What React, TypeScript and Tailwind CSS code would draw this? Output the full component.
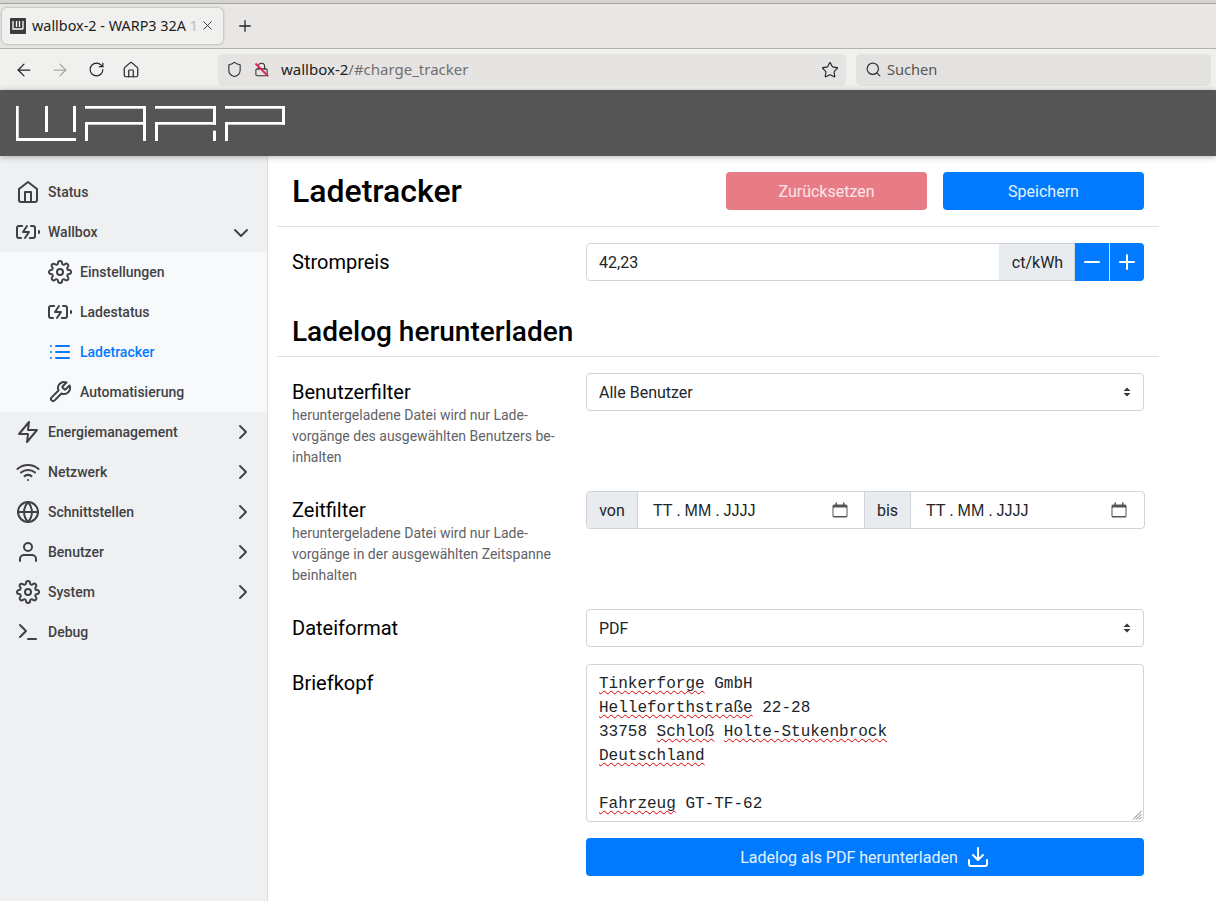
import React from "react";
import { ArrowLeft, ArrowRight, RotateCw, House, Shield, Lock, Star, Search, X, Plus } from "lucide-react";
import { FiHome, FiBatteryCharging, FiSettings, FiList, FiTool, FiZap, FiWifi, FiGlobe, FiUser, FiChevronRight, FiChevronDown, FiTerminal, FiDownload, FiMinus, FiPlus } from "react-icons/fi";

const roboto = "font-['Roboto',sans-serif]";
const chromeFont = "font-['Noto_Sans',sans-serif]";

function Logo() {
  const bars: [number, number, number, number][] = [
    [16, 106, 2.7, 35], [16, 138, 60, 3], [45, 106, 3, 26], [73, 106, 3, 26],
    [85, 106, 61, 2.7], [143, 106, 3, 35], [85, 122, 58, 2.7], [85, 122, 3, 19],
    [155, 106, 61, 2.7], [213, 106, 3, 18.7], [155, 122, 61, 2.7], [155, 122, 3, 19], [213, 130.7, 3, 10.3],
    [225, 106, 60, 2.7], [282, 106, 3, 18.7], [225, 122, 60, 2.7], [225, 122, 3, 19],
  ];
  return (
    <svg width="290" height="66" viewBox="0 90 290 66" className="block">
      {bars.map((b, i) => <rect key={i} x={b[0]} y={b[1]} width={b[2]} height={b[3]} fill="#fff" />)}
    </svg>
  );
}

function BrowserChrome() {
  return (
    <div className={`${chromeFont} h-[90px] shrink-0 flex flex-col`}>
      <div className="h-[4px] bg-[#d6d4d1] border-b border-[#a3a29f]" />
      <div className="h-[45px] bg-[#e8e7e5] border-b border-[#b3b2af] flex items-center pl-[2px]">
        <div className="w-[221px] h-[36px] bg-[#f0f0ee] rounded-[5px] shadow-[0_0_3px_rgba(0,0,0,0.35)] flex items-center pl-[8px] relative overflow-hidden">
          <svg width="16" height="16" viewBox="0 0 16 16" className="shrink-0">
            <rect width="16" height="16" rx="1" fill="#3b3b3b" />
            <path d="M3 3v8h10M6.5 3v6M9.5 3v6M13 3v8" stroke="#fff" strokeWidth="1.3" fill="none" />
          </svg>
          <span className="ml-[6px] text-[14.4px] text-[#1c1c1c] whitespace-nowrap">wallbox-2 - WARP3 32A <span className="text-[#bbbbb9]">1</span></span>
          <X size={15} strokeWidth={1.5} className="absolute right-[8px] top-[10px] text-[#333]" />
        </div>
        <Plus size={18} strokeWidth={1.7} className="ml-[13px] text-[#222]" />
      </div>
      <div className="h-[41px] bg-[#f0f0ef] flex items-center">
        <ArrowLeft size={20} strokeWidth={1.5} className="ml-[14px] text-[#222]" />
        <ArrowRight size={20} strokeWidth={1.5} className="ml-[16px] text-[#a5a5a3]" />
        <RotateCw size={17} strokeWidth={1.6} className="ml-[18px] text-[#222]" />
        <House size={18} strokeWidth={1.6} className="ml-[17px] text-[#222]" />
        <div className="ml-[78px] w-[628px] h-[32px] bg-[#e5e4e2] rounded-[5px] flex items-center pl-[8px] pr-[7px]">
          <Shield size={17} strokeWidth={1.6} className="text-[#333]" />
          <span className="relative ml-[11px] block w-[16px] h-[16px]">
            <Lock size={15} strokeWidth={1.7} className="text-[#333]" />
            <span className="absolute left-[-1px] top-[7px] w-[18px] h-[1.5px] bg-[#e0295c] rotate-45" />
          </span>
          <span className="ml-[11px] text-[15px] whitespace-nowrap text-[#1c1c1c]">wallbox-2<span className="text-[#6f6f6e]">/#charge_tracker</span></span>
          <Star size={18} strokeWidth={1.5} className="ml-auto text-[#222]" />
        </div>
        <div className="ml-[10px] w-[355px] h-[32px] bg-[#e3e2e0] rounded-[5px] flex items-center pl-[9px]">
          <Search size={17} strokeWidth={1.7} className="text-[#333]" />
          <span className="ml-[5px] text-[14.6px] text-[#555]">Suchen</span>
        </div>
      </div>
    </div>
  );
}

function NavItem({ icon, label, chevron, sub, active }: { icon: React.ReactNode; label: string; chevron?: "r" | "d"; sub?: boolean; active?: boolean }) {
  return (
    <div className={`h-[40px] flex items-center ${sub ? "pl-[48px]" : "pl-[16px]"} ${active ? "text-[#007bff]" : "text-[#3f4144]"}`}>
      <span className="w-[24px] h-[24px] flex items-center justify-center shrink-0">{icon}</span>
      <span className="ml-[8px] text-[14px] font-medium whitespace-nowrap">{label}</span>
      {chevron === "r" && <FiChevronRight size={24} className="ml-auto mr-[12px]" strokeWidth={1.9} />}
      {chevron === "d" && <FiChevronDown size={24} className="ml-auto mr-[14px] mt-[2px]" strokeWidth={1.9} />}
    </div>
  );
}

function Sidebar() {
  return (
    <nav className="w-[268px] shrink-0 bg-[#eff0f2] border-r border-[#dcdde0] pt-[16px]">
      <NavItem icon={<FiHome size={24} strokeWidth={2} />} label="Status" />
      <NavItem icon={<FiBatteryCharging size={24} strokeWidth={2} />} label="Wallbox" chevron="d" />
      <div className="bg-[#f8f9fb]">
        <NavItem sub icon={<FiSettings size={24} strokeWidth={2} />} label="Einstellungen" />
        <NavItem sub icon={<FiBatteryCharging size={24} strokeWidth={2} />} label="Ladestatus" />
        <NavItem sub active icon={<FiList size={24} strokeWidth={2} />} label="Ladetracker" />
        <NavItem sub icon={<FiTool size={24} strokeWidth={2} />} label="Automatisierung" />
      </div>
      <NavItem icon={<FiZap size={24} strokeWidth={2} />} label="Energiemanagement" chevron="r" />
      <NavItem icon={<FiWifi size={24} strokeWidth={2} />} label="Netzwerk" chevron="r" />
      <NavItem icon={<FiGlobe size={24} strokeWidth={2} />} label="Schnittstellen" chevron="r" />
      <NavItem icon={<FiUser size={24} strokeWidth={2} />} label="Benutzer" chevron="r" />
      <NavItem icon={<FiSettings size={24} strokeWidth={2} />} label="System" chevron="r" />
      <NavItem icon={<FiTerminal size={24} strokeWidth={2} />} label="Debug" />
    </nav>
  );
}

function Caret() {
  return (
    <svg width="8" height="10" viewBox="0 0 8 10" className="ml-auto mr-[12px]">
      <path d="M4 0.5 7.5 4H.5zM4 9.5.5 6h7z" fill="#343a40" />
    </svg>
  );
}

function SelectBox({ value }: { value: string }) {
  return (
    <div className="w-[558px] h-[38px] rounded-[4px] border border-[#ced4da] bg-white flex items-center pl-[12px] text-[16px] text-[#212529]">
      <span className="pt-px">{value}</span>
      <Caret />
    </div>
  );
}

function Calendar({ className }: { className: string }) {
  return (
    <svg width="16" height="16" viewBox="0 0 16 16" className={className}>
      <path d="M3.5 0.5h1.5v2h6v-2h1.5v2h1.5a1.5 1.5 0 0 1 1.5 1.5v10a1.5 1.5 0 0 1-1.5 1.5h-12a1.5 1.5 0 0 1-1.5-1.5v-10a1.5 1.5 0 0 1 1.5-1.5h1.5z" fill="#555" />
      <rect x="1.5" y="5.5" width="13" height="8.5" rx="0.5" fill="#fff" />
    </svg>
  );
}

function FieldLabel({ title, help }: { title: string; help?: string[] }) {
  return (
    <div className="w-[294px] shrink-0">
      <div className="h-[38px] leading-[38px] text-[20px] text-black">{title}</div>
      {help && (
        <div className="-mt-[6px] text-[14px] leading-[21px] text-[#5f6368]">
          {help.map((l) => <div key={l} className="whitespace-nowrap">{l}</div>)}
        </div>
      )}
    </div>
  );
}

function Wavy({ children }: { children: React.ReactNode }) {
  return <span className="underline decoration-wavy decoration-[#dc0000] decoration-[1.2px] underline-offset-[2px] [text-decoration-skip-ink:none]">{children}</span>;
}

function Main() {
  return (
    <main className={`flex-1 min-w-0 pl-[9px] pr-[57px] ${roboto} text-[#212529]`}>
      <div className="h-[71px] border-b border-[#dfe0e4] px-[15px] flex items-center">
        <h1 className="text-[32px] font-medium text-black leading-[38px]">Ladetracker</h1>
        <button className="ml-auto w-[201px] h-[38px] pt-px rounded-[4px] bg-[#e87c86] text-white/80 text-[16px]">Zurücksetzen</button>
        <button className="ml-[16px] w-[201px] h-[38px] pt-px rounded-[4px] bg-[#007bff] text-white/90 text-[16px]">Speichern</button>
      </div>

      <div className="px-[15px] mt-[16px] flex">
        <FieldLabel title="Strompreis" />
        <div className="w-[558px] h-[38px] flex">
          <div className="flex-1 rounded-l-[4px] border border-[#ced4da] pl-[12px] pt-px flex items-center text-[16px]">42,23</div>
          <div className="w-[76px] bg-[#e9ecef] border-y border-r border-[#ced4da] -ml-px pl-[2px] pt-px flex items-center justify-center text-[16px]">ct/kWh</div>
          <div className="w-[34px] bg-[#007bff] flex items-center justify-center text-white"><FiMinus size={24} strokeWidth={2} /></div>
          <div className="w-[35px] bg-[#007bff] border-l border-white/80 rounded-r-[4px] flex items-center justify-center text-white"><FiPlus size={24} strokeWidth={2} /></div>
        </div>
      </div>

      <div className="mt-[32px] h-[44px] border-b border-[#dfe0e4] px-[15px] flex items-start">
        <h2 className="text-[28px] font-medium text-black leading-[38px]">Ladelog herunterladen</h2>
      </div>

      <div className="px-[15px] mt-[16px] flex">
        <FieldLabel title="Benutzerfilter" help={["heruntergeladene Datei wird nur Lade-", "vorgänge des ausgewählten Benutzers be-", "inhalten"]} />
        <SelectBox value="Alle Benutzer" />
      </div>

      <div className="px-[15px] mt-[23px] flex">
        <FieldLabel title="Zeitfilter" help={["heruntergeladene Datei wird nur Lade-", "vorgänge in der ausgewählten Zeitspanne", "beinhalten"]} />
        <div className="w-[559px] shrink-0 h-[38px] rounded-[4px] border border-[#ced4da] flex items-stretch overflow-hidden text-[16px]">
          <div className="w-[51px] bg-[#e9ecef] border-r border-[#ced4da] pt-px flex items-center justify-center">von</div>
          <div className="w-[226px] flex items-center pl-[15px] font-['Liberation_Sans',sans-serif]">
            <span className="pt-px [word-spacing:-0.5px]">TT . MM . JJJJ</span>
            <Calendar className="ml-auto mr-[16px]" />
          </div>
          <div className="w-[47px] bg-[#e9ecef] border-x border-[#ced4da] pt-px flex items-center justify-center">bis</div>
          <div className="flex-1 flex items-center pl-[15px] font-['Liberation_Sans',sans-serif]">
            <span className="pt-px [word-spacing:-0.5px]">TT . MM . JJJJ</span>
            <Calendar className="ml-auto mr-[17px]" />
          </div>
        </div>
      </div>

      <div className="px-[15px] mt-[23px] flex">
        <FieldLabel title="Dateiformat" />
        <SelectBox value="PDF" />
      </div>

      <div className="px-[15px] mt-[17px] flex">
        <FieldLabel title="Briefkopf" />
        <div className="w-[558px]">
          <div className="relative h-[158px] rounded-[4px] border border-[#ced4da] pl-[12px] pt-[7px] font-['Liberation_Mono',monospace] text-[16px] leading-[24px] text-[#212529] whitespace-pre overflow-hidden">
            <div><Wavy>Tinkerforge</Wavy> GmbH</div>
            <div><Wavy>Helleforthstraße</Wavy> 22-28</div>
            <div>33758 <Wavy>Schloß</Wavy> <Wavy>Holte-Stukenbrock</Wavy></div>
            <div><Wavy>Deutschland</Wavy></div>
            <div>&nbsp;</div>
            <div><Wavy>Fahrzeug</Wavy> GT-TF-62</div>
            <svg width="10" height="10" viewBox="0 0 10 10" className="absolute right-[1px] bottom-[1px]">
              <path d="M9.5 1 1 9.5M9.5 4 4 9.5M9.5 7 7 9.5" stroke="#777" strokeWidth="1" fill="none" />
            </svg>
          </div>
          <button className="mt-[16px] w-full h-[38px] rounded-[4px] bg-[#007bff] text-white/90 text-[16px] flex items-center justify-center">
            <span className="pt-px">Ladelog als PDF herunterladen</span>
            <FiDownload size={24} strokeWidth={2} className="ml-[8px] text-white" />
          </button>
        </div>
      </div>
    </main>
  );
}

export default function App() {
  return (
    <div className={`w-[1216px] h-[901px] overflow-hidden flex flex-col bg-white ${roboto}`}>
      <BrowserChrome />
      <header className="h-[66px] shrink-0 bg-[#555555] relative z-10 shadow-[0_1px_6px_rgba(0,0,0,0.3)]">
        <Logo />
      </header>
      <div className="flex-1 flex min-h-0">
        <Sidebar />
        <Main />
      </div>
    </div>
  );
}
